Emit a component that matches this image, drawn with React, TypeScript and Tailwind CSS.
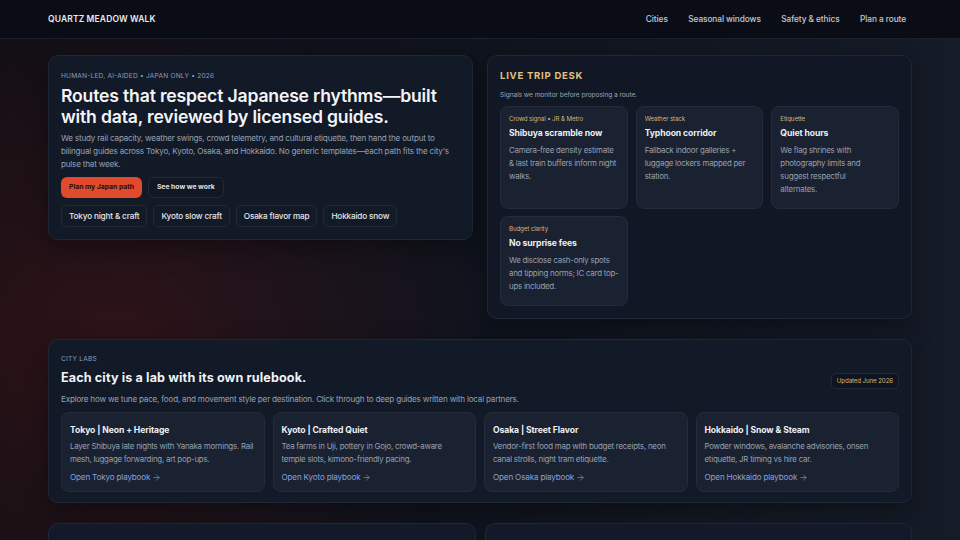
import { ArrowRight } from 'lucide-react'

const font = { fontFamily: 'Inter, "Noto Sans", sans-serif' }

// line breaks follow the reference wrapping
const signals = [
  {
    label: 'Crowd signal • JR & Metro',
    title: 'Shibuya scramble now',
    body: 'Camera-free density estimate\n& last train buffers inform night\nwalks.',
  },
  {
    label: 'Weather stack',
    title: 'Typhoon corridor',
    body: 'Fallback indoor galleries +\nluggage lockers mapped per\nstation.',
  },
  {
    label: 'Etiquette',
    title: 'Quiet hours',
    body: 'We flag shrines with\nphotography limits and\nsuggest respectful\nalternates.',
  },
  {
    label: 'Budget clarity',
    title: 'No surprise fees',
    body: 'We disclose cash-only spots\nand tipping norms; IC card top-\nups included.',
  },
]

const cities = [
  {
    title: 'Tokyo | Neon + Heritage',
    body: 'Layer Shibuya late nights with Yanaka mornings. Rail mesh, luggage forwarding, art pop-ups.',
    link: 'Open Tokyo playbook',
  },
  {
    title: 'Kyoto | Crafted Quiet',
    body: 'Tea farms in Uji, pottery in Gojo, crowd-aware temple slots, kimono-friendly pacing.',
    link: 'Open Kyoto playbook',
  },
  {
    title: 'Osaka | Street Flavor',
    body: 'Vendor-first food map with budget receipts, neon canal strolls, night tram etiquette.',
    link: 'Open Osaka playbook',
  },
  {
    title: 'Hokkaido | Snow & Steam',
    body: 'Powder windows, avalanche advisories, onsen etiquette, JR timing vs hire car.',
    link: 'Open Hokkaido playbook',
  },
]

const chips = ['Tokyo night & craft', 'Kyoto slow craft', 'Osaka flavor map', 'Hokkaido snow']

export default function App() {
  return (
    <div
      style={font}
      className="w-[960px] h-[540px] overflow-hidden bg-[#0f131d] bg-[radial-gradient(ellipse_380px_320px_at_12%_62%,rgba(90,24,26,0.38),transparent),linear-gradient(90deg,#120f15_0%,#0f131d_45%,#151b27_100%)] text-[#eef0f4]"
    >
      {/* Top bar */}
      <header className="h-[39px] px-12 flex items-center justify-between bg-[#0b0d16] border-b border-[#1b202c]">
        <span className="text-[8.5px] font-semibold tracking-[0.015em] text-[#e8eaf0]">QUARTZ MEADOW WALK</span>
        <nav className="mr-[6px] flex items-center gap-[20.5px] text-[8.3px] font-medium tracking-[-0.01em] text-[#c3c8d4]">
          <span>Cities</span>
          <span>Seasonal windows</span>
          <span>Safety &amp; ethics</span>
          <span>Plan a route</span>
        </nav>
      </header>

      <main className="px-12 pt-4 flex flex-col">
        <div className="grid grid-cols-2 gap-[14px] items-start">
          {/* Hero */}
          <section className="rounded-[10px] border border-[#1f2635] bg-[#121927] px-3 pt-[16px] pb-[12px] shadow-[0_8px_24px_rgba(0,0,0,0.35)]">
            <p className="text-[6.6px] leading-[8px] tracking-[0.03em] text-[#8d9dbd]">
              HUMAN-LED, AI-AIDED • JAPAN ONLY • 2026
            </p>
            <h1 className="mt-[5px] text-[17.6px] leading-[21px] font-semibold tracking-[-0.01em] text-[#f2f4f8]">
              Routes that respect Japanese rhythms—built with data, reviewed by licensed guides.
            </h1>
            <p className="mt-[5px] text-[8.1px] leading-[13px] text-[#98a1b2] tracking-[-0.025em]">
              We study rail capacity, weather swings, crowd telemetry, and cultural etiquette, then hand the output to
              bilingual guides across Tokyo, Kyoto, Osaka, and Hokkaido. No generic templates—each path fits the city's
              pulse that week.
            </p>
            <div className="mt-[6px] flex gap-[6px]">
              <button className="h-[21px] px-[8px] rounded-[6px] bg-[#e14a2c] text-[6.8px] font-bold text-[#2b0b05]">
                Plan my Japan path
              </button>
              <button className="h-[21px] px-[8px] rounded-[6px] border border-[#222a38] bg-[#111824] text-[6.8px] font-bold text-[#dfe3ea]">
                See how we work
              </button>
            </div>
            <div className="mt-[7px] flex gap-[6px]">
              {chips.map((c) => (
                <span
                  key={c}
                  className="h-[22px] px-[7px] flex items-center rounded-[6px] border border-[#222a38] bg-[#131a27] text-[8.2px] font-medium tracking-[-0.02em] text-[#e3e6ec]"
                >
                  {c}
                </span>
              ))}
            </div>
          </section>

          {/* Live desk */}
          <section className="rounded-[10px] border border-[#1f2635] bg-[#111725] px-3 pt-[14px] pb-3 shadow-[0_8px_24px_rgba(0,0,0,0.35)]">
            <h2 className="text-[9.5px] leading-[12px] font-bold tracking-[0.08em] text-[#e4c17f]">LIVE TRIP DESK</h2>
            <p className="mt-[9px] text-[6.6px] leading-[8px] tracking-[-0.01em] text-[#9aa3b4]">
              Signals we monitor before proposing a route.
            </p>
            <div className="mt-[7px] grid grid-cols-3 gap-x-2 gap-y-[7px]">
              {signals.map((s) => (
                <div
                  key={s.title}
                  className="rounded-[8px] border border-[#242c3b] bg-[#1a2130] px-2 pt-[8px] pb-[12px]"
                >
                  <p className="text-[6.2px] leading-[8px] tracking-[-0.02em] text-[#d6b479]">{s.label}</p>
                  <p className="mt-[5px] text-[8.6px] leading-[11px] font-bold tracking-[-0.01em] text-[#eef0f4]">
                    {s.title}
                  </p>
                  <p className="mt-[5px] whitespace-pre-line text-[7.9px] leading-[13px] tracking-[-0.03em] text-[#97a0b1]">
                    {s.body}
                  </p>
                </div>
              ))}
            </div>
          </section>
        </div>

        {/* City labs */}
        <section className="mt-[20px] rounded-[10px] border border-[#1f2635] bg-[#121927] px-3 pt-[15px] pb-[10px] shadow-[0_8px_24px_rgba(0,0,0,0.35)]">
          <p className="text-[6.6px] leading-[8px] tracking-[0.03em] text-[#8d9dbd]">CITY LABS</p>
          <div className="mt-[7px] flex items-end justify-between">
            <h2 className="text-[12.6px] leading-[15px] font-bold tracking-[0.01em] text-[#f0f2f6]">
              Each city is a lab with its own rulebook.
            </h2>
            <span className="mb-[-4px] h-[16px] px-[5px] flex items-center rounded-[5px] border border-[#222a38] bg-[#0f1520] text-[6.2px] tracking-[-0.02em] text-[#d6b479]">
              Updated June 2026
            </span>
          </div>
          <p className="mt-[9px] text-[8.1px] leading-[10px] text-[#98a1b2] tracking-[-0.025em]">
            Explore how we tune pace, food, and movement style per destination. Click through to deep guides written with
            local partners.
          </p>
          <div className="mt-[8px] grid grid-cols-4 gap-2">
            {cities.map((c) => (
              <div
                key={c.title}
                className="rounded-[8px] border border-[#242c3b] bg-[#1a2130] px-2 pt-[12px] pb-[9px]"
              >
                <p className="text-[8.6px] leading-[11px] font-bold tracking-[-0.01em] text-[#eef0f4]">{c.title}</p>
                <p className="mt-[4px] text-[7.9px] leading-[13px] tracking-[-0.03em] text-[#97a0b1]">{c.body}</p>
                <p className="mt-[6px] flex items-center gap-[2px] text-[8.1px] leading-[10px] tracking-[-0.02em] text-[#8aa0d8]">
                  {c.link}
                  <ArrowRight size={9} strokeWidth={1.6} />
                </p>
              </div>
            ))}
          </div>
        </section>

        {/* Next row, cut off */}
        <div className="mt-[20px] grid grid-cols-2 gap-[9px]">
          <div className="h-[60px] rounded-[10px] border border-[#1f2635] bg-[#121a29]" />
          <div className="h-[60px] rounded-[10px] border border-[#1f2635] bg-[#121a29]" />
        </div>
      </main>
    </div>
  )
}
